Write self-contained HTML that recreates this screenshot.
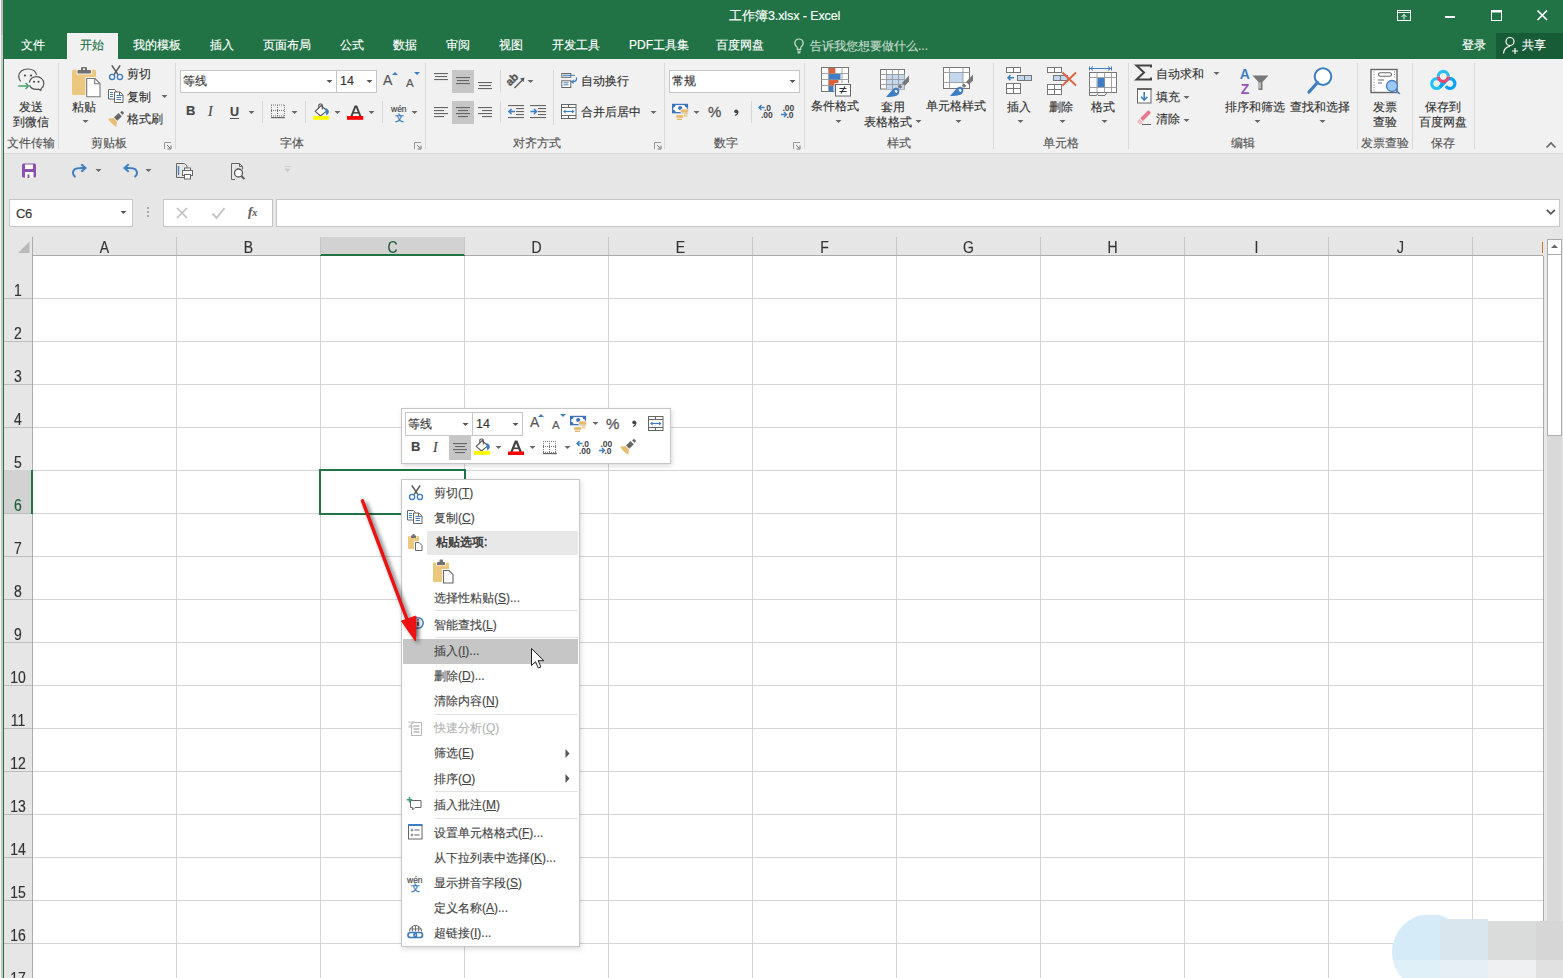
<!DOCTYPE html>
<html><head><meta charset="utf-8">
<style>
*{box-sizing:border-box}
html,body{margin:0;padding:0}
body{width:1563px;height:978px;overflow:hidden;position:relative;background:#fff;font-family:"Liberation Sans",sans-serif;font-size:12px;color:#444}
.a{position:absolute}
.t{position:absolute;white-space:nowrap;line-height:12px;font-size:12px;-webkit-text-stroke:0.15px currentColor}
svg{position:absolute;overflow:visible}
</style></head><body>
<div class="a" style="left:0px;top:0px;width:1px;height:978px;background:#f6f6f6;"></div>
<div class="a" style="left:1px;top:0px;width:2px;height:978px;background:#c9c6c8;"></div>
<div class="a" style="left:1px;top:0px;width:2px;height:35px;background:#bab5b7;"></div>
<div class="a" style="left:3px;top:0px;width:1560px;height:59px;background:#217346;"></div>
<div class="a" style="left:3px;top:0px;width:1px;height:978px;background:#217346;"></div>
<div class="t" style="left:729px;top:10px;font-size:12.5px;color:#fff;">工作簿<span style="letter-spacing:-0.1px">3.xlsx - Excel</span></div>
<svg style="left:1396px;top:9px" width="16" height="13" viewBox="1396 9 16 13"><rect x="1397.5" y="10.5" width="13" height="10" fill="none" stroke="#fff"/><path d="M1397.5 12.5h13" stroke="#fff"/><path d="M1404 19.5v-5M1401.5 17l2.5-2.5 2.5 2.5" fill="none" stroke="#fff"/></svg>
<div class="a" style="left:1445px;top:16px;width:10px;height:2px;background:#fff;"></div>
<svg style="left:1490px;top:9px" width="13" height="13" viewBox="1490 9 13 13"><rect x="1491.5" y="10.5" width="10" height="10" fill="none" stroke="#fff"/><path d="M1491.5 11.5h10" stroke="#fff" stroke-width="2"/></svg>
<svg style="left:1536px;top:9px" width="13" height="13" viewBox="1536 9 13 13"><path d="M1537.5 10.5l9.5 9.5M1547 10.5l-9.5 9.5" stroke="#fff" stroke-width="1.7"/></svg>
<div class="a" style="left:67px;top:33px;width:51px;height:26px;background:#f1f1f1;"></div>
<div class="t" style="left:21px;top:39px;font-size:12px;color:#fff;">文件</div>
<div class="t" style="left:80px;top:39px;font-size:12px;color:#217346;">开始</div>
<div class="t" style="left:133px;top:39px;font-size:12px;color:#fff;">我的模板</div>
<div class="t" style="left:210px;top:39px;font-size:12px;color:#fff;">插入</div>
<div class="t" style="left:263px;top:39px;font-size:12px;color:#fff;">页面布局</div>
<div class="t" style="left:340px;top:39px;font-size:12px;color:#fff;">公式</div>
<div class="t" style="left:393px;top:39px;font-size:12px;color:#fff;">数据</div>
<div class="t" style="left:446px;top:39px;font-size:12px;color:#fff;">审阅</div>
<div class="t" style="left:499px;top:39px;font-size:12px;color:#fff;">视图</div>
<div class="t" style="left:552px;top:39px;font-size:12px;color:#fff;">开发工具</div>
<div class="t" style="left:629px;top:39px;font-size:12px;color:#fff;">PDF工具集</div>
<div class="t" style="left:716px;top:39px;font-size:12px;color:#fff;">百度网盘</div>
<svg style="left:792px;top:36px" width="15" height="20" viewBox="792 36 15 20"><path d="M799 39a4.1 4.1 0 0 0-2.5 7.4c.5.5.8 1.1.8 1.9v1h3.4v-1c0-.8.3-1.4.8-1.9A4.1 4.1 0 0 0 799 39z" fill="none" stroke="#c5dacc" stroke-width="1.2"/><path d="M797.2 51.2h3.6" stroke="#c5dacc" stroke-width="1.1"/><path d="M797.6 52.8h2.8" stroke="#c5dacc" stroke-width="1.4"/></svg>
<div class="t" style="left:810px;top:40px;font-size:12px;color:#c5dacc;">告诉我您想要做什么...</div>
<div class="t" style="left:1462px;top:39px;font-size:12px;color:#fff;">登录</div>
<div class="a" style="left:1496px;top:33px;width:67px;height:26px;background:#185c37;"></div>
<svg style="left:1502px;top:36px" width="20" height="19" viewBox="1502 36 20 19"><circle cx="1510" cy="41.5" r="4" fill="none" stroke="#fff" stroke-width="1.2"/><path d="M1503.5 53.5c0-4 3-7 6.5-7" fill="none" stroke="#fff" stroke-width="1.2"/><path d="M1515 48v6M1512 51h6" stroke="#fff" stroke-width="1.2"/></svg>
<div class="t" style="left:1522px;top:39px;font-size:12px;color:#fff;">共享</div>
<div class="a" style="left:4px;top:59px;width:1559px;height:94px;background:#f1f1f1;"></div>
<div class="a" style="left:4px;top:153px;width:1559px;height:1px;background:#d8d8d8;"></div>
<div class="a" style="left:58px;top:63px;width:1px;height:86px;background:#dadada;"></div>
<div class="a" style="left:175px;top:63px;width:1px;height:86px;background:#dadada;"></div>
<div class="a" style="left:425px;top:63px;width:1px;height:86px;background:#dadada;"></div>
<div class="a" style="left:664px;top:63px;width:1px;height:86px;background:#dadada;"></div>
<div class="a" style="left:804px;top:63px;width:1px;height:86px;background:#dadada;"></div>
<div class="a" style="left:993px;top:63px;width:1px;height:86px;background:#dadada;"></div>
<div class="a" style="left:1128px;top:63px;width:1px;height:86px;background:#dadada;"></div>
<div class="a" style="left:1357px;top:63px;width:1px;height:86px;background:#dadada;"></div>
<div class="a" style="left:1412px;top:63px;width:1px;height:86px;background:#dadada;"></div>
<div class="a" style="left:1474px;top:63px;width:1px;height:86px;background:#dadada;"></div>
<div class="t" style="left:7px;top:137px;font-size:12px;color:#555;">文件传输</div>
<div class="t" style="left:91px;top:137px;font-size:12px;color:#555;">剪贴板</div>
<div class="t" style="left:280px;top:137px;font-size:12px;color:#555;">字体</div>
<div class="t" style="left:513px;top:137px;font-size:12px;color:#555;">对齐方式</div>
<div class="t" style="left:714px;top:137px;font-size:12px;color:#555;">数字</div>
<div class="t" style="left:887px;top:137px;font-size:12px;color:#555;">样式</div>
<div class="t" style="left:1043px;top:137px;font-size:12px;color:#555;">单元格</div>
<div class="t" style="left:1231px;top:137px;font-size:12px;color:#555;">编辑</div>
<div class="t" style="left:1361px;top:137px;font-size:12px;color:#555;">发票查验</div>
<div class="t" style="left:1431px;top:137px;font-size:12px;color:#555;">保存</div>
<svg style="left:164px;top:142px" width="8" height="8" viewBox="164 142 8 8"><path d="M164.5 149V142.5H171" fill="none" stroke="#999"/><path d="M167 145l3.5 3.5M167.5 149h3.5v-3.5" fill="none" stroke="#777"/></svg>
<svg style="left:414px;top:142px" width="8" height="8" viewBox="414 142 8 8"><path d="M414.5 149V142.5H421" fill="none" stroke="#999"/><path d="M417 145l3.5 3.5M417.5 149h3.5v-3.5" fill="none" stroke="#777"/></svg>
<svg style="left:654px;top:142px" width="8" height="8" viewBox="654 142 8 8"><path d="M654.5 149V142.5H661" fill="none" stroke="#999"/><path d="M657 145l3.5 3.5M657.5 149h3.5v-3.5" fill="none" stroke="#777"/></svg>
<svg style="left:793px;top:142px" width="8" height="8" viewBox="793 142 8 8"><path d="M793.5 149V142.5H800" fill="none" stroke="#999"/><path d="M796 145l3.5 3.5M796.5 149h3.5v-3.5" fill="none" stroke="#777"/></svg>
<svg style="left:1545px;top:140px" width="13" height="10" viewBox="1545 140 13 10"><path d="M1546.5 147.5l4.5-4.5 4.5 4.5" fill="none" stroke="#666" stroke-width="1.7"/></svg>
<svg style="left:16px;top:66px" width="32" height="27" viewBox="16 66 32 27"><path d="M20.6 81.3c-1.2-1.4-1.9-3.1-1.9-5 0-4.3 4-7.3 9.1-7.3 4.3 0 7.9 2.3 8.8 5.9" fill="none" stroke="#555" stroke-width="1.2"/><circle cx="25" cy="75.5" r="1.1" fill="#444"/><circle cx="31" cy="75.5" r="1.1" fill="#444"/><path d="M29.3 82.5c.9-3.4 3.7-5.8 7.2-5.8 4 0 7.3 3 7.3 6.7 0 2-.9 3.8-2.4 5l-.6 1.9-2.3-1.2c-.7.2-1.4.3-2.1.3-3.1 0-5.8-1.7-6.8-4.2" fill="none" stroke="#555" stroke-width="1.2"/><circle cx="34" cy="81.7" r="1" fill="#444"/><circle cx="38.5" cy="81.7" r="1" fill="#444"/><path d="M18.3 86h10M25.5 83l3 3-3 3" fill="none" stroke="#4aa56a" stroke-width="1.5"/></svg>
<div class="t" style="left:19px;top:101px;font-size:12px;color:#333;">发送</div>
<div class="t" style="left:13px;top:116px;font-size:12px;color:#333;">到微信</div>
<svg style="left:70px;top:65px" width="32" height="33" viewBox="70 65 32 33"><rect x="72" y="69.7" width="24" height="25.2" rx="1.5" fill="#ecc77e"/><path d="M76.5 69h15.5v5.5h-15.5z" fill="#f1f1f1"/><rect x="77.5" y="70" width="13.5" height="3.6" rx=".8" fill="#707070"/><rect x="81" y="67" width="6" height="4" rx="1.2" fill="#707070"/><rect x="83" y="68.3" width="2" height="1.6" fill="#f1f1f1"/><path d="M85.2 77v20.7h15.8v-15l-5.7-5.7z" fill="#f1f1f1"/><path d="M86.7 78.5h8.3l5 5v13.2h-13.3z" fill="#fff" stroke="#777" stroke-width="1.1"/><path d="M94.7 78.5v5.2h5.2" fill="none" stroke="#777" stroke-width="1.1"/></svg>
<div class="t" style="left:72px;top:101px;font-size:12px;color:#333;">粘贴</div>
<svg style="left:81px;top:119px" width="8" height="5" viewBox="81 119 8 5"><path d="M82.5 120h6l-3 3z" fill="#666"/></svg>
<svg style="left:108px;top:64px" width="17" height="18" viewBox="108 64 17 18"><path d="M111.8 65.4l6.2 9.2M120.2 65.4l-6.2 9.2" stroke="#555" stroke-width="1.5"/><circle cx="112.1" cy="76.9" r="2.6" fill="none" stroke="#3e7ec2" stroke-width="1.3"/><circle cx="119.9" cy="76.9" r="2.6" fill="none" stroke="#3e7ec2" stroke-width="1.3"/></svg>
<div class="t" style="left:127px;top:68px;font-size:12px;color:#333;">剪切</div>
<svg style="left:107px;top:88px" width="17" height="16" viewBox="107 88 17 16"><path d="M108.5 89.5h6l1.5 1.5v8h-7.5z" fill="#fff" stroke="#666"/><path d="M114.5 92h5.5l3 3v7.5h-8.5z" fill="#fff" stroke="#666"/><path d="M119.5 92v3.5h3" fill="none" stroke="#666"/><path d="M110 92.5h3M110 94.5h3M110 96.5h3M116.5 95.5h4.5M116.5 97.5h4.5M116.5 99.5h4.5" stroke="#3e7ec2"/></svg>
<div class="t" style="left:127px;top:91px;font-size:12px;color:#333;">复制</div>
<svg style="left:160px;top:94px" width="8" height="5" viewBox="160 94 8 5"><path d="M161.5 95h6l-3 3z" fill="#666"/></svg>
<svg style="left:106px;top:109px" width="20" height="19" viewBox="106 109 20 19"><path d="M114 117.5L118.5 113L121.8 116.3L117.3 120.8Z" fill="#666"/><path d="M120.2 112.6L122 110.8L124.2 113L122.4 114.8Z" fill="#666"/><path d="M108 118.8L113.3 118L117 121.7L116.2 127Q111 124 108 118.8Z" fill="#e8bd72"/></svg>
<div class="t" style="left:127px;top:113px;font-size:12px;color:#333;">格式刷</div>
<div class="a" style="left:180px;top:70px;width:157px;height:23px;background:#fff;border:1px solid #c6c6c6"></div>
<div class="a" style="left:336px;top:70px;width:41px;height:23px;background:#fff;border:1px solid #c6c6c6"></div>
<div class="t" style="left:183px;top:75px;font-size:12px;color:#333;">等线</div>
<svg style="left:325px;top:79px" width="8" height="5" viewBox="325 79 8 5"><path d="M326.5 80h6l-3 3z" fill="#555"/></svg>
<div class="t" style="left:340px;top:75px;font-size:12.5px;color:#333;">14</div>
<svg style="left:365px;top:79px" width="8" height="5" viewBox="365 79 8 5"><path d="M366.5 80h6l-3 3z" fill="#555"/></svg>
<div class="t" style="left:383px;top:74px;font-size:14px;color:#555;">A</div>
<svg style="left:391px;top:71px" width="8" height="5" viewBox="391 71 8 5"><path d="M392 75l3-3 3 3z" fill="#3e7ec2"/></svg>
<div class="t" style="left:406px;top:77px;font-size:11.5px;color:#555;">A</div>
<svg style="left:413px;top:71px" width="8" height="5" viewBox="413 71 8 5"><path d="M414 72h6l-3 3z" fill="#3e7ec2"/></svg>
<div class="t" style="left:186px;top:105px;font-size:13px;color:#444;font-weight:bold">B</div>
<div class="t" style="left:208px;top:106px;font-size:14px;color:#444;font-style:italic;font-family:Liberation Serif">I</div>
<div class="t" style="left:230px;top:106px;font-size:12.5px;color:#444;font-weight:bold">U</div>
<div class="a" style="left:230px;top:118px;width:9px;height:1.2px;background:#555;"></div>
<svg style="left:247px;top:110px" width="8" height="5" viewBox="247 110 8 5"><path d="M248.5 111h6l-3 3z" fill="#666"/></svg>
<div class="a" style="left:262px;top:101px;width:1px;height:22px;background:#d6d6d6;"></div>
<svg style="left:270px;top:103px" width="16" height="17" viewBox="270 103 16 17"><rect x="271" y="104.5" width="1" height="1" fill="#777"/><rect x="273" y="104.5" width="1" height="1" fill="#777"/><rect x="275" y="104.5" width="1" height="1" fill="#777"/><rect x="277" y="104.5" width="1" height="1" fill="#777"/><rect x="279" y="104.5" width="1" height="1" fill="#777"/><rect x="281" y="104.5" width="1" height="1" fill="#777"/><rect x="283" y="104.5" width="1" height="1" fill="#777"/><rect x="271" y="110" width="1" height="1" fill="#777"/><rect x="273" y="110" width="1" height="1" fill="#777"/><rect x="275" y="110" width="1" height="1" fill="#777"/><rect x="277" y="110" width="1" height="1" fill="#777"/><rect x="279" y="110" width="1" height="1" fill="#777"/><rect x="281" y="110" width="1" height="1" fill="#777"/><rect x="283" y="110" width="1" height="1" fill="#777"/><rect x="271" y="115.5" width="1" height="1" fill="#777"/><rect x="273" y="115.5" width="1" height="1" fill="#777"/><rect x="275" y="115.5" width="1" height="1" fill="#777"/><rect x="277" y="115.5" width="1" height="1" fill="#777"/><rect x="279" y="115.5" width="1" height="1" fill="#777"/><rect x="281" y="115.5" width="1" height="1" fill="#777"/><rect x="283" y="115.5" width="1" height="1" fill="#777"/><rect x="271" y="105" width="1" height="1" fill="#777"/><rect x="271" y="107" width="1" height="1" fill="#777"/><rect x="271" y="109" width="1" height="1" fill="#777"/><rect x="271" y="111" width="1" height="1" fill="#777"/><rect x="271" y="113" width="1" height="1" fill="#777"/><rect x="271" y="115" width="1" height="1" fill="#777"/><rect x="277" y="105" width="1" height="1" fill="#777"/><rect x="277" y="107" width="1" height="1" fill="#777"/><rect x="277" y="109" width="1" height="1" fill="#777"/><rect x="277" y="111" width="1" height="1" fill="#777"/><rect x="277" y="113" width="1" height="1" fill="#777"/><rect x="277" y="115" width="1" height="1" fill="#777"/><rect x="284" y="105" width="1" height="1" fill="#777"/><rect x="284" y="107" width="1" height="1" fill="#777"/><rect x="284" y="109" width="1" height="1" fill="#777"/><rect x="284" y="111" width="1" height="1" fill="#777"/><rect x="284" y="113" width="1" height="1" fill="#777"/><rect x="284" y="115" width="1" height="1" fill="#777"/><rect x="271" y="117" width="14" height="1.2" fill="#666"/></svg>
<svg style="left:290px;top:110px" width="8" height="5" viewBox="290 110 8 5"><path d="M291.5 111h6l-3 3z" fill="#666"/></svg>
<div class="a" style="left:305px;top:101px;width:1px;height:22px;background:#d6d6d6;"></div>
<svg style="left:311px;top:102px" width="20" height="19" viewBox="311 102 20 19"><path d="M315.2 111.3L321.2 105.5L326.8 110.8L320.5 116Z" fill="#fff" stroke="#555" stroke-width="1.1"/><path d="M318.8 108V105Q318.8 104 320 104H321Q322.3 104 322.3 105V109.5" fill="none" stroke="#555" stroke-width="1.1"/><path d="M325.3 108Q329.5 109.5 328.8 112.5Q328 114.5 326.2 115.5L325.8 111Z" fill="#3e7ec2"/><rect x="313" y="116" width="16.2" height="3.8" fill="#ffff00"/></svg>
<svg style="left:333px;top:110px" width="8" height="5" viewBox="333 110 8 5"><path d="M334.5 111h6l-3 3z" fill="#666"/></svg>
<svg style="left:346px;top:103px" width="19" height="18" viewBox="346 103 19 18"><path d="M351.3 116.5l4-10h1.2L360.5 116.5" fill="none" stroke="#444" stroke-width="2"/><path d="M353 112.8h5.6" stroke="#444" stroke-width="1.5"/><rect x="347" y="116" width="16.2" height="3.8" fill="#ff0000"/></svg>
<svg style="left:367px;top:110px" width="8" height="5" viewBox="367 110 8 5"><path d="M368.5 111h6l-3 3z" fill="#666"/></svg>
<div class="a" style="left:382px;top:101px;width:1px;height:22px;background:#d6d6d6;"></div>
<div class="t" style="left:391px;top:103px;font-size:8.5px;color:#444;">wén</div>
<svg style="left:393px;top:111px" width="13" height="11" viewBox="393 111 13 11"><text x="394.8" y="120.5" font-size="9" font-weight="bold" fill="#3e7ec2">文</text></svg>
<svg style="left:410px;top:110px" width="8" height="5" viewBox="410 110 8 5"><path d="M411.5 111h6l-3 3z" fill="#666"/></svg>
<div class="a" style="left:452px;top:70px;width:22px;height:23px;background:#c6c6c6;"></div>
<div class="a" style="left:452px;top:101px;width:22px;height:23px;background:#c6c6c6;"></div>
<svg style="left:432px;top:70px" width="62" height="22" viewBox="432 70 62 22"><rect x="434" y="73" width="14" height="1.1" fill="#666"/><rect x="435" y="76" width="12" height="1.1" fill="#666"/><rect x="434" y="79" width="14" height="1.1" fill="#666"/><rect x="456" y="77" width="14" height="1.1" fill="#666"/><rect x="457" y="80" width="12" height="1.1" fill="#666"/><rect x="456" y="83" width="14" height="1.1" fill="#666"/><rect x="478" y="82" width="14" height="1.1" fill="#666"/><rect x="479" y="85" width="12" height="1.1" fill="#666"/><rect x="478" y="88" width="14" height="1.1" fill="#666"/></svg>
<svg style="left:432px;top:105px" width="62" height="14" viewBox="432 105 62 14"><rect x="434" y="107" width="14" height="1.1" fill="#666"/><rect x="434" y="110" width="10" height="1.1" fill="#666"/><rect x="434" y="113" width="14" height="1.1" fill="#666"/><rect x="434" y="116" width="10" height="1.1" fill="#666"/><rect x="456" y="107" width="14" height="1.1" fill="#666"/><rect x="458" y="110" width="10" height="1.1" fill="#666"/><rect x="456" y="113" width="14" height="1.1" fill="#666"/><rect x="458" y="116" width="10" height="1.1" fill="#666"/><rect x="478" y="107" width="14" height="1.1" fill="#666"/><rect x="482" y="110" width="10" height="1.1" fill="#666"/><rect x="478" y="113" width="14" height="1.1" fill="#666"/><rect x="482" y="116" width="10" height="1.1" fill="#666"/></svg>
<div class="a" style="left:500px;top:70px;width:1px;height:22px;background:#d6d6d6;"></div>
<div class="a" style="left:500px;top:101px;width:1px;height:22px;background:#d6d6d6;"></div>
<svg style="left:506px;top:71px" width="21" height="19" viewBox="506 71 21 19"><text x="0" y="0" font-size="11" font-weight="bold" fill="#555" stroke="#555" stroke-width="0.35" transform="translate(510 86.5) rotate(-45)">ab</text><path d="M514.5 88l9-9" stroke="#555" stroke-width="1.3"/><path d="M524.5 77.5l-4.5 1 3.5 3.5z" fill="#555"/></svg>
<svg style="left:526px;top:79px" width="8" height="5" viewBox="526 79 8 5"><path d="M527.5 80h6l-3 3z" fill="#666"/></svg>
<svg style="left:506px;top:103px" width="42" height="17" viewBox="506 103 42 17"><rect x="508" y="105" width="16" height="1.1" fill="#666"/><rect x="516" y="108" width="8" height="1.1" fill="#666"/><rect x="516" y="111" width="8" height="1.1" fill="#666"/><rect x="516" y="114" width="8" height="1.1" fill="#666"/><rect x="508" y="117" width="16" height="1.1" fill="#666"/><path d="M509 111.5h6M511.5 109l-2.5 2.5 2.5 2.5" fill="none" stroke="#3e7ec2" stroke-width="1.6"/><rect x="530" y="105" width="16" height="1.1" fill="#666"/><rect x="538" y="108" width="8" height="1.1" fill="#666"/><rect x="538" y="111" width="8" height="1.1" fill="#666"/><rect x="538" y="114" width="8" height="1.1" fill="#666"/><rect x="530" y="117" width="16" height="1.1" fill="#666"/><path d="M530.5 111.5h6M534 109l2.5 2.5-2.5 2.5" fill="none" stroke="#3e7ec2" stroke-width="1.6"/></svg>
<div class="a" style="left:553px;top:70px;width:1px;height:55px;background:#d6d6d6;"></div>
<svg style="left:559px;top:71px" width="21" height="19" viewBox="559 71 21 19"><rect x="561.8" y="73.5" width="9" height="3.8" fill="none" stroke="#666"/><rect x="561.8" y="80.8" width="9" height="6.7" fill="#fff" stroke="#666"/><path d="M563 75.3h12M563.5 82.8h5M563.5 84.8h5" stroke="#3e7ec2"/><path d="M576.3 77.5c1 2.5-.5 4.2-3.5 4.2" fill="none" stroke="#3e7ec2" stroke-width="1.3"/><path d="M570.6 81.7l3-2.2v4.4z" fill="#3e7ec2"/></svg>
<div class="t" style="left:581px;top:75px;font-size:12px;color:#333;">自动换行</div>
<svg style="left:559px;top:102px" width="19" height="19" viewBox="559 102 19 19"><rect x="561.5" y="104.5" width="14.5" height="14" fill="#fff" stroke="#666"/><path d="M561.5 107.5h14.5M561.5 115.5h14.5M568.5 104.5v3M568.5 115.5v3" stroke="#666"/><path d="M564.5 111.5h8" stroke="#3e7ec2" stroke-width="1.2"/><path d="M563 111.5l2.5-2v4zM574.5 111.5l-2.5-2v4z" fill="#3e7ec2"/></svg>
<div class="t" style="left:581px;top:106px;font-size:12px;color:#333;">合并后居中</div>
<svg style="left:649px;top:110px" width="8" height="5" viewBox="649 110 8 5"><path d="M650.5 111h6l-3 3z" fill="#666"/></svg>
<div class="a" style="left:669px;top:70px;width:131px;height:23px;background:#fff;border:1px solid #c6c6c6"></div>
<div class="t" style="left:672px;top:75px;font-size:12px;color:#333;">常规</div>
<svg style="left:788px;top:79px" width="8" height="5" viewBox="788 79 8 5"><path d="M789.5 80h6l-3 3z" fill="#555"/></svg>
<svg style="left:670px;top:101px" width="22" height="21" viewBox="670 101 22 21"><rect x="672.65" y="104.45" width="14.8" height="8.2" fill="#fff" stroke="#3d73b8" stroke-width="1.3"/><path d="M672.6 104.39999999999999h3A3 3 0 0 1 672.6 107.39999999999999zM687.5 104.39999999999999v3A3 3 0 0 1 684.5 104.39999999999999zM672.6 112.7v-3A3 3 0 0 1 675.6 112.7zM687.5 112.7h-3A3 3 0 0 1 687.5 109.7z" fill="#3d73b8"/><circle cx="680.2" cy="108.1" r="2.1" fill="#3d73b8"/><rect x="680.5" y="109.1" width="8" height="4" rx="1.6" fill="#e8b96a" stroke="#f1f1f1" stroke-width=".8"/><rect x="683.8" y="113.39999999999999" width="3.6" height="1" fill="#e8b96a"/><rect x="683.8" y="115.3" width="3.6" height="1.2" fill="#e8b96a"/><rect x="675.8" y="114.7" width="7.8" height="3.6" rx="1.5" fill="#e8b96a" stroke="#f1f1f1" stroke-width=".8"/><rect x="677" y="118.8" width="5" height="1.2" fill="#e8b96a"/></svg>
<svg style="left:692px;top:110px" width="8" height="5" viewBox="692 110 8 5"><path d="M693.5 111h6l-3 3z" fill="#666"/></svg>
<div class="t" style="left:708px;top:106px;font-size:15px;color:#555;-webkit-text-stroke:0.3px #555">%</div>
<svg style="left:731px;top:107px" width="10" height="10" viewBox="731 107 10 10"><circle cx="736.2" cy="111.3" r="1.9" fill="#444"/><path d="M737.9 111.5c0 1.8-1 3.2-2.8 4" fill="none" stroke="#444" stroke-width="1.3"/></svg>
<div class="a" style="left:751px;top:101px;width:1px;height:22px;background:#d6d6d6;"></div>
<svg style="left:756px;top:102px" width="44" height="19" viewBox="756 102 44 19"><path d="M759 107.5h5.5M761.5 105l-2.5 2.5 2.5 2.5" fill="none" stroke="#3e7ec2" stroke-width="1.4"/><text x="764" y="111" font-size="8.5" fill="#444" font-weight="bold">.0</text><text x="761" y="118" font-size="8.5" fill="#444" font-weight="bold">.00</text><text x="782.5" y="111" font-size="8.5" fill="#444" font-weight="bold">.00</text><path d="M781 114.5h5.5M784 112l2.5 2.5-2.5 2.5" fill="none" stroke="#3e7ec2" stroke-width="1.4"/><text x="786.5" y="118" font-size="8.5" fill="#444" font-weight="bold">.0</text></svg>
<svg style="left:819px;top:65px" width="34" height="33" viewBox="819 65 34 33"><rect x="821.5" y="67.5" width="27" height="24" fill="#fff" stroke="#777"/><path d="M828.5 67.5v24M835 67.5v24M842 67.5v24M821.5 73.5h27M821.5 79.5h27M821.5 85.5h27" stroke="#999" fill="none" stroke-width=".9"/><rect x="829" y="68" width="6" height="5.5" fill="#e0603b"/><rect x="829" y="74" width="11.5" height="5.5" fill="#3f7ec5"/><rect x="829" y="80" width="9.5" height="5.5" fill="#e0603b"/><rect x="829" y="86" width="4.5" height="5.5" fill="#3f7ec5"/><rect x="834.5" y="83" width="18" height="14" fill="#f1f1f1"/><rect x="835.5" y="84.5" width="15" height="11.5" fill="#fff" stroke="#666"/><path d="M839.5 88.5h7M839.5 91.5h7M845 86.5l-4 7" stroke="#333" stroke-width="1.1"/></svg>
<div class="t" style="left:811px;top:100px;font-size:12px;color:#333;">条件格式</div>
<svg style="left:834px;top:119px" width="8" height="5" viewBox="834 119 8 5"><path d="M835.5 120h6l-3 3z" fill="#666"/></svg>
<svg style="left:878px;top:65px" width="34" height="33" viewBox="878 65 34 33"><rect x="880.5" y="69.5" width="24" height="19.5" fill="#fff" stroke="#777"/><rect x="886.5" y="74.5" width="18" height="14.5" fill="#c3d7ee"/><path d="M886.5 69.5v19.5M892.5 69.5v19.5M898.5 69.5v19.5M880.5 74.5h24M880.5 79.5h24M880.5 84.5h24" stroke="#999" stroke-width=".9"/><path d="M888 97l0 0" /><path d="M886 97L893 89C895 87 898 87.5 899 89.5C900 91.5 899 94 897 95.5C894 97 890 97 886 97z" fill="#3f7ec5"/><path d="M894.5 90.5c1-.9 2.3-.6 2.8.3.4.8 0 1.7-.7 2.2-.6-.1-1.1-.5-1.4-1-.3-.5-.6-1-.7-1.5z" fill="#fff"/><path d="M898 86.5l2-2 2.3 2.3-2 2z" fill="#777"/><path d="M902 83l7-7.5v6l-4.2 4.2z" fill="#777"/></svg>
<div class="t" style="left:881px;top:101px;font-size:12px;color:#333;">套用</div>
<div class="t" style="left:864px;top:116px;font-size:12px;color:#333;">表格格式</div>
<svg style="left:914px;top:119px" width="8" height="5" viewBox="914 119 8 5"><path d="M915.5 120h6l-3 3z" fill="#666"/></svg>
<svg style="left:941px;top:65px" width="35" height="33" viewBox="941 65 35 33"><rect x="943.5" y="67.5" width="26" height="21" fill="#fff" stroke="#777"/><rect x="949.5" y="72.5" width="13.5" height="10" fill="#c3d7ee"/><path d="M949.5 67.5v21M963 67.5v21M943.5 72.5h26M943.5 82.5h26" stroke="#999" stroke-width=".9"/><path d="M950 96L957 88C959 86 962 86.5 963 88.5C964 90.5 963 93 961 94.5C958 96 954 96 950 96z" fill="#3f7ec5"/><path d="M958.5 89.5c1-.9 2.3-.6 2.8.3.4.8 0 1.7-.7 2.2-.6-.1-1.1-.5-1.4-1-.3-.5-.6-1-.7-1.5z" fill="#fff"/><path d="M962 85.5l2-2 2.3 2.3-2 2z" fill="#777"/><path d="M966 82l7-7.5v6l-4.2 4.2z" fill="#777"/></svg>
<div class="t" style="left:926px;top:100px;font-size:12px;color:#333;">单元格样式</div>
<svg style="left:954px;top:119px" width="8" height="5" viewBox="954 119 8 5"><path d="M955.5 120h6l-3 3z" fill="#666"/></svg>
<svg style="left:1004px;top:65px" width="30" height="31" viewBox="1004 65 30 31"><rect x="1006.5" y="67.5" width="14" height="5" fill="#fff" stroke="#777"/><path d="M1013.5 67.5v5" stroke="#777"/><rect x="1017.5" y="75.5" width="14" height="5" fill="#c3d7ee" stroke="#777"/><path d="M1024.5 75.5v5" stroke="#777"/><rect x="1006.5" y="83.5" width="14" height="10" fill="#fff" stroke="#777"/><path d="M1013.5 83.5v10M1006.5 88.5h14" stroke="#777"/><path d="M1008 77.8h6M1010.5 75.3l-2.5 2.5 2.5 2.5" fill="none" stroke="#3e7ec2" stroke-width="1.6"/></svg>
<div class="t" style="left:1007px;top:101px;font-size:12px;color:#333;">插入</div>
<svg style="left:1016px;top:119px" width="8" height="5" viewBox="1016 119 8 5"><path d="M1017.5 120h6l-3 3z" fill="#666"/></svg>
<svg style="left:1045px;top:65px" width="33" height="31" viewBox="1045 65 33 31"><rect x="1047.5" y="67.5" width="14" height="5" fill="#fff" stroke="#777"/><path d="M1054.5 67.5v5" stroke="#777"/><rect x="1053.5" y="75.5" width="14" height="5" fill="#c3d7ee" stroke="#777"/><path d="M1060.5 75.5v5" stroke="#777"/><rect x="1047.5" y="84.5" width="14" height="10" fill="#fff" stroke="#777"/><path d="M1054.5 84.5v10M1047.5 89.5h14" stroke="#777"/><path d="M1062.5 72.5l13.5 13M1076 72.5l-13.5 13" stroke="#e0603b" stroke-width="1.8"/></svg>
<div class="t" style="left:1049px;top:101px;font-size:12px;color:#333;">删除</div>
<svg style="left:1058px;top:119px" width="8" height="5" viewBox="1058 119 8 5"><path d="M1059.5 120h6l-3 3z" fill="#666"/></svg>
<svg style="left:1087px;top:65px" width="32" height="33" viewBox="1087 65 32 33"><path d="M1090 68.5h21" stroke="#3e7ec2"/><path d="M1089.5 66.5v4M1111.5 66.5v4" stroke="#3e7ec2"/><path d="M1093 66.5l-2.5 2 2.5 2M1108 66.5l2.5 2-2.5 2" fill="none" stroke="#3e7ec2"/><rect x="1089.5" y="72.5" width="27" height="20" fill="#fff" stroke="#777"/><path d="M1097 72.5v20M1104.5 72.5v20M1111.5 72.5v20M1089.5 77.5h27M1089.5 87.5h27" stroke="#999" stroke-width=".9"/><rect x="1097.5" y="78" width="7" height="9" fill="#3f7ec5"/><path d="M1089.5 92.5v3h7l2-3M1098 95.5h7l2-3" fill="none" stroke="#777"/></svg>
<div class="t" style="left:1091px;top:101px;font-size:12px;color:#333;">格式</div>
<svg style="left:1100px;top:119px" width="8" height="5" viewBox="1100 119 8 5"><path d="M1101.5 120h6l-3 3z" fill="#666"/></svg>
<svg style="left:1134px;top:63px" width="19" height="19" viewBox="1134 63 19 19"><path d="M1151 67.5v-2h-14.5l7.5 7-7.5 7h14.5v-2" fill="none" stroke="#444" stroke-width="2"/></svg>
<div class="t" style="left:1156px;top:68px;font-size:12px;color:#333;">自动求和</div>
<svg style="left:1212px;top:71px" width="8" height="5" viewBox="1212 71 8 5"><path d="M1213.5 72h6l-3 3z" fill="#666"/></svg>
<svg style="left:1136px;top:87px" width="17" height="18" viewBox="1136 87 17 18"><rect x="1137.5" y="88.5" width="13.5" height="14.5" fill="#fff" stroke="#666"/><rect x="1137" y="88" width="14.5" height="2" fill="#666"/><path d="M1144.2 92v8M1141 96.8l3.2 3.2 3.2-3.2" fill="none" stroke="#3e7ec2" stroke-width="1.6"/></svg>
<div class="t" style="left:1156px;top:91px;font-size:12px;color:#333;">填充</div>
<svg style="left:1182px;top:95px" width="8" height="5" viewBox="1182 95 8 5"><path d="M1183.5 96h6l-3 3z" fill="#666"/></svg>
<svg style="left:1136px;top:110px" width="17" height="17" viewBox="1136 110 17 17"><path d="M1143 121l7.2-7.2c.6-.6.6-1.4 0-2l-.8-.8c-.6-.6-1.4-.6-2 0l-7.2 7.2z" fill="#e8798d"/><path d="M1140.2 118.2l-2.5 2.5c-.5.5-.5 1.3 0 1.8l1.5 1.5h2.5l1.3-1.3-2.8-2.8z" fill="#f3b8c3"/><path d="M1142 124.5h9" stroke="#666"/></svg>
<div class="t" style="left:1156px;top:113px;font-size:12px;color:#333;">清除</div>
<svg style="left:1182px;top:118px" width="8" height="5" viewBox="1182 118 8 5"><path d="M1183.5 119h6l-3 3z" fill="#666"/></svg>
<svg style="left:1238px;top:64px" width="34" height="32" viewBox="1238 64 34 32"><text x="1239.8" y="79.3" font-size="14" font-weight="bold" fill="#3f7ec5" font-family="Liberation Sans">A</text><text x="1240.8" y="93.6" font-size="14" font-weight="bold" fill="#9355c0" font-family="Liberation Sans">Z</text><path d="M1252.5 75.5h16l-6 6.5v8h-4v-8z" fill="#777"/><path d="M1260 82.5v6" stroke="#fff" stroke-width="1"/></svg>
<div class="t" style="left:1225px;top:101px;font-size:12px;color:#333;">排序和筛选</div>
<svg style="left:1253px;top:119px" width="8" height="5" viewBox="1253 119 8 5"><path d="M1254.5 120h6l-3 3z" fill="#666"/></svg>
<svg style="left:1305px;top:65px" width="29" height="31" viewBox="1305 65 29 31"><circle cx="1323" cy="76.6" r="8.3" fill="#fff" stroke="#3e7ec2" stroke-width="2"/><path d="M1317.5 82.5l-8.5 9.5" stroke="#3e7ec2" stroke-width="3.2" stroke-linecap="round"/></svg>
<div class="t" style="left:1290px;top:101px;font-size:12px;color:#333;">查找和选择</div>
<svg style="left:1318px;top:119px" width="8" height="5" viewBox="1318 119 8 5"><path d="M1319.5 120h6l-3 3z" fill="#666"/></svg>
<svg style="left:1368px;top:67px" width="34" height="29" viewBox="1368 67 34 29"><rect x="1371" y="69.5" width="26" height="23" fill="#fff" stroke="#666" stroke-width="1.4"/><path d="M1374 71.5v19M1394.5 71.5v6" stroke="#777" stroke-dasharray="1 1.6"/><rect x="1378.5" y="72.7" width="13" height="3.6" rx="1.8" fill="none" stroke="#666" stroke-width="1.1"/><path d="M1378 80h6M1378 83h4" stroke="#666" stroke-width="1.1"/><circle cx="1392" cy="86" r="5.5" fill="#9ec8f5" stroke="#3f7ec5" stroke-width="1.3"/><path d="M1395.8 90l4 4" stroke="#3f7ec5" stroke-width="1.6"/></svg>
<div class="t" style="left:1373px;top:101px;font-size:12px;color:#333;">发票</div>
<div class="t" style="left:1373px;top:116px;font-size:12px;color:#333;">查验</div>
<svg style="left:1428px;top:68px" width="30" height="24" viewBox="1428 68 30 24"><circle cx="1436.6" cy="83.6" r="4.9" fill="none" stroke="#22c4f5" stroke-width="3.2"/><path d="M1440.1 87.1L1446.5 80.1A4.9 4.9 0 1 1 1445.8 86.1" fill="none" stroke="#0aa2f2" stroke-width="3.2"/><path d="M1438.3 76.4a5 5 0 0 1 10 0" fill="none" stroke="#28c0f6" stroke-width="3.2"/><path d="M1448.3 76.4a5 5 0 0 1-10 0" fill="none" stroke="#f2476a" stroke-width="3.2"/></svg>
<div class="t" style="left:1425px;top:101px;font-size:12px;color:#333;">保存到</div>
<div class="t" style="left:1419px;top:116px;font-size:12px;color:#333;">百度网盘</div>
<div class="a" style="left:4px;top:154px;width:1559px;height:102px;background:#e6e6e6;"></div>
<svg style="left:20px;top:161px" width="19" height="19" viewBox="20 161 19 19"><rect x="22" y="163.5" width="14" height="14" rx="1.5" fill="#8c4fb6"/><rect x="25" y="164.5" width="8" height="4.5" fill="#fff"/><rect x="25" y="172" width="8.5" height="6" fill="#fff"/><rect x="27.5" y="174.5" width="2" height="3.5" fill="#8c4fb6"/></svg>
<svg style="left:70px;top:161px" width="20" height="19" viewBox="70 161 20 19"><path d="M75.5 177c-2.8-1.5-3.5-5.5-1-7.6 1.8-1.5 5-1.6 9.5-1.4" fill="none" stroke="#3e7ec2" stroke-width="2"/><path d="M81.3 164.3l4.2 3.7-4.2 3.7" fill="none" stroke="#3e7ec2" stroke-width="2"/></svg>
<svg style="left:94px;top:168px" width="8" height="5" viewBox="94 168 8 5"><path d="M95.5 169h6l-3 3z" fill="#666"/></svg>
<svg style="left:120px;top:161px" width="20" height="19" viewBox="120 161 20 19"><path d="M134.5 177c2.8-1.5 3.5-5.5 1-7.6-1.8-1.5-5-1.6-9.5-1.4" fill="none" stroke="#3e7ec2" stroke-width="2"/><path d="M128.7 164.3l-4.2 3.7 4.2 3.7" fill="none" stroke="#3e7ec2" stroke-width="2"/></svg>
<svg style="left:144px;top:168px" width="8" height="5" viewBox="144 168 8 5"><path d="M145.5 169h6l-3 3z" fill="#666"/></svg>
<svg style="left:174px;top:161px" width="22" height="21" viewBox="174 161 22 21"><path d="M176.5 163.5h8l2.5 2.5v3" fill="none" stroke="#666"/><path d="M176.5 163.5v14h8" fill="none" stroke="#666"/><path d="M178.5 166v9" stroke="#3e7ec2" stroke-width="1.3"/><rect x="182.5" y="170.5" width="10" height="5" fill="#fff" stroke="#666"/><rect x="184.5" y="168" width="6" height="2.5" fill="#fff" stroke="#666"/><rect x="184.5" y="174.5" width="6" height="4.5" fill="#fff" stroke="#666"/></svg>
<svg style="left:229px;top:161px" width="19" height="21" viewBox="229 161 19 21"><path d="M235 179.5h-3.5v-16h8l3 3v3" fill="none" stroke="#666"/><path d="M239.5 163.5v3h3" fill="none" stroke="#666"/><circle cx="238.5" cy="173" r="4" fill="#fff" stroke="#555" stroke-width="1.3"/><path d="M241.3 176l3.2 3.2" stroke="#555" stroke-width="1.8"/></svg>
<svg style="left:283px;top:165px" width="9" height="10" viewBox="283 165 9 10"><path d="M284.5 166.5h6M285 169h5l-2.5 3z" stroke="#ccc" fill="#ccc" stroke-width=".8"/></svg>
<div class="a" style="left:9px;top:199px;width:124px;height:28px;background:#fff;border:1px solid #c6c6c6"></div>
<div class="t" style="left:16px;top:208px;font-size:13px;color:#333;letter-spacing:-0.3px">C6</div>
<svg style="left:119px;top:210px" width="8" height="5" viewBox="119 210 8 5"><path d="M120.5 211h6l-3 3z" fill="#555"/></svg>
<div class="a" style="left:147px;top:207px;width:2px;height:2px;background:#a8a8a8;"></div>
<div class="a" style="left:147px;top:211px;width:2px;height:2px;background:#a8a8a8;"></div>
<div class="a" style="left:147px;top:215px;width:2px;height:2px;background:#a8a8a8;"></div>
<div class="a" style="left:163px;top:199px;width:110px;height:28px;background:#fff;border:1px solid #c6c6c6"></div>
<svg style="left:174px;top:204px" width="16" height="18" viewBox="174 204 16 18"><path d="M177 208l10 10M187 208l-10 10" stroke="#bdbdbd" stroke-width="1.5"/></svg>
<svg style="left:210px;top:204px" width="18" height="18" viewBox="210 204 18 18"><path d="M212.5 213.5l4 4.5 8-10" fill="none" stroke="#c6c6c6" stroke-width="2"/></svg>
<div class="t" style="left:248px;top:206px;font-size:13px;color:#606060;font-family:Liberation Serif;font-weight:bold"><i>f</i><span style="font-size:10px"><i>x</i></span></div>
<div class="a" style="left:276px;top:199px;width:1284px;height:28px;background:#fff;border:1px solid #c6c6c6"></div>
<svg style="left:1544px;top:206px" width="14" height="12" viewBox="1544 206 14 12"><path d="M1546.8 209.8l4 4 4-4" fill="none" stroke="#555" stroke-width="1.8"/></svg>
<div class="a" style="left:320px;top:237px;width:145px;height:18px;background:#d2d2d2;"></div>
<div class="a" style="left:33px;top:255px;width:1510px;height:1px;background:#ababab;"></div>
<div class="a" style="left:320px;top:254px;width:145px;height:2px;background:#217346;"></div>
<svg style="left:16px;top:239px" width="16" height="16" viewBox="16 239 16 16"><path d="M29.5 241.5v11.5h-11.5z" fill="#b9b9b9"/></svg>
<div class="a" style="left:32px;top:237px;width:1px;height:741px;background:#ababab;"></div>
<div class="t" style="left:94px;top:241px;width:21px;text-align:center;font-size:14px;line-height:14px;transform:scaleY(1.12);transform-origin:50% 11px;color:#333">A</div>
<div class="a" style="left:176px;top:237px;width:1px;height:18px;background:#c6c6c6;"></div>
<div class="t" style="left:238px;top:241px;width:21px;text-align:center;font-size:14px;line-height:14px;transform:scaleY(1.12);transform-origin:50% 11px;color:#333">B</div>
<div class="a" style="left:320px;top:237px;width:1px;height:18px;background:#c6c6c6;"></div>
<div class="t" style="left:382px;top:241px;width:21px;text-align:center;font-size:14px;line-height:14px;transform:scaleY(1.12);transform-origin:50% 11px;color:#1d5c38">C</div>
<div class="a" style="left:464px;top:237px;width:1px;height:18px;background:#c6c6c6;"></div>
<div class="t" style="left:526px;top:241px;width:21px;text-align:center;font-size:14px;line-height:14px;transform:scaleY(1.12);transform-origin:50% 11px;color:#333">D</div>
<div class="a" style="left:608px;top:237px;width:1px;height:18px;background:#c6c6c6;"></div>
<div class="t" style="left:670px;top:241px;width:21px;text-align:center;font-size:14px;line-height:14px;transform:scaleY(1.12);transform-origin:50% 11px;color:#333">E</div>
<div class="a" style="left:752px;top:237px;width:1px;height:18px;background:#c6c6c6;"></div>
<div class="t" style="left:814px;top:241px;width:21px;text-align:center;font-size:14px;line-height:14px;transform:scaleY(1.12);transform-origin:50% 11px;color:#333">F</div>
<div class="a" style="left:896px;top:237px;width:1px;height:18px;background:#c6c6c6;"></div>
<div class="t" style="left:958px;top:241px;width:21px;text-align:center;font-size:14px;line-height:14px;transform:scaleY(1.12);transform-origin:50% 11px;color:#333">G</div>
<div class="a" style="left:1040px;top:237px;width:1px;height:18px;background:#c6c6c6;"></div>
<div class="t" style="left:1102px;top:241px;width:21px;text-align:center;font-size:14px;line-height:14px;transform:scaleY(1.12);transform-origin:50% 11px;color:#333">H</div>
<div class="a" style="left:1184px;top:237px;width:1px;height:18px;background:#c6c6c6;"></div>
<div class="t" style="left:1246px;top:241px;width:21px;text-align:center;font-size:14px;line-height:14px;transform:scaleY(1.12);transform-origin:50% 11px;color:#333">I</div>
<div class="a" style="left:1328px;top:237px;width:1px;height:18px;background:#c6c6c6;"></div>
<div class="t" style="left:1390px;top:241px;width:21px;text-align:center;font-size:14px;line-height:14px;transform:scaleY(1.12);transform-origin:50% 11px;color:#333">J</div>
<div class="a" style="left:1472px;top:237px;width:1px;height:18px;background:#c6c6c6;"></div>
<div class="a" style="left:1542px;top:242px;width:1.3px;height:11px;background:#c47a26;"></div>
<div class="a" style="left:33px;top:256px;width:1510px;height:722px;background:#fff;"></div>
<div class="a" style="left:176px;top:256px;width:1px;height:722px;background:#d4d4d4;"></div>
<div class="a" style="left:320px;top:256px;width:1px;height:722px;background:#d4d4d4;"></div>
<div class="a" style="left:464px;top:256px;width:1px;height:722px;background:#d4d4d4;"></div>
<div class="a" style="left:608px;top:256px;width:1px;height:722px;background:#d4d4d4;"></div>
<div class="a" style="left:752px;top:256px;width:1px;height:722px;background:#d4d4d4;"></div>
<div class="a" style="left:896px;top:256px;width:1px;height:722px;background:#d4d4d4;"></div>
<div class="a" style="left:1040px;top:256px;width:1px;height:722px;background:#d4d4d4;"></div>
<div class="a" style="left:1184px;top:256px;width:1px;height:722px;background:#d4d4d4;"></div>
<div class="a" style="left:1328px;top:256px;width:1px;height:722px;background:#d4d4d4;"></div>
<div class="a" style="left:1472px;top:256px;width:1px;height:722px;background:#d4d4d4;"></div>
<div class="a" style="left:33px;top:298px;width:1510px;height:1px;background:#d4d4d4;"></div>
<div class="a" style="left:33px;top:341px;width:1510px;height:1px;background:#d4d4d4;"></div>
<div class="a" style="left:33px;top:384px;width:1510px;height:1px;background:#d4d4d4;"></div>
<div class="a" style="left:33px;top:427px;width:1510px;height:1px;background:#d4d4d4;"></div>
<div class="a" style="left:33px;top:470px;width:1510px;height:1px;background:#d4d4d4;"></div>
<div class="a" style="left:33px;top:513px;width:1510px;height:1px;background:#d4d4d4;"></div>
<div class="a" style="left:33px;top:556px;width:1510px;height:1px;background:#d4d4d4;"></div>
<div class="a" style="left:33px;top:599px;width:1510px;height:1px;background:#d4d4d4;"></div>
<div class="a" style="left:33px;top:642px;width:1510px;height:1px;background:#d4d4d4;"></div>
<div class="a" style="left:33px;top:685px;width:1510px;height:1px;background:#d4d4d4;"></div>
<div class="a" style="left:33px;top:728px;width:1510px;height:1px;background:#d4d4d4;"></div>
<div class="a" style="left:33px;top:771px;width:1510px;height:1px;background:#d4d4d4;"></div>
<div class="a" style="left:33px;top:814px;width:1510px;height:1px;background:#d4d4d4;"></div>
<div class="a" style="left:33px;top:857px;width:1510px;height:1px;background:#d4d4d4;"></div>
<div class="a" style="left:33px;top:900px;width:1510px;height:1px;background:#d4d4d4;"></div>
<div class="a" style="left:33px;top:943px;width:1510px;height:1px;background:#d4d4d4;"></div>
<div class="a" style="left:33px;top:986px;width:1510px;height:1px;background:#d4d4d4;"></div>
<div class="a" style="left:4px;top:256px;width:28px;height:722px;background:#e6e6e6;"></div>
<div class="a" style="left:4px;top:298px;width:28px;height:1px;background:#bdbdbd;"></div>
<div class="a" style="left:4px;top:341px;width:28px;height:1px;background:#bdbdbd;"></div>
<div class="a" style="left:4px;top:384px;width:28px;height:1px;background:#bdbdbd;"></div>
<div class="a" style="left:4px;top:427px;width:28px;height:1px;background:#bdbdbd;"></div>
<div class="a" style="left:4px;top:470px;width:28px;height:1px;background:#bdbdbd;"></div>
<div class="a" style="left:4px;top:513px;width:28px;height:1px;background:#bdbdbd;"></div>
<div class="a" style="left:4px;top:556px;width:28px;height:1px;background:#bdbdbd;"></div>
<div class="a" style="left:4px;top:599px;width:28px;height:1px;background:#bdbdbd;"></div>
<div class="a" style="left:4px;top:642px;width:28px;height:1px;background:#bdbdbd;"></div>
<div class="a" style="left:4px;top:685px;width:28px;height:1px;background:#bdbdbd;"></div>
<div class="a" style="left:4px;top:728px;width:28px;height:1px;background:#bdbdbd;"></div>
<div class="a" style="left:4px;top:771px;width:28px;height:1px;background:#bdbdbd;"></div>
<div class="a" style="left:4px;top:814px;width:28px;height:1px;background:#bdbdbd;"></div>
<div class="a" style="left:4px;top:857px;width:28px;height:1px;background:#bdbdbd;"></div>
<div class="a" style="left:4px;top:900px;width:28px;height:1px;background:#bdbdbd;"></div>
<div class="a" style="left:4px;top:943px;width:28px;height:1px;background:#bdbdbd;"></div>
<div class="a" style="left:4px;top:470px;width:28px;height:43px;background:#d2d2d2;"></div>
<div class="a" style="left:32px;top:256px;width:1px;height:722px;background:#ababab;"></div>
<div class="a" style="left:31px;top:470px;width:2px;height:44px;background:#217346;"></div>
<div class="t" style="left:4px;top:284px;width:28px;text-align:center;font-size:14px;line-height:14px;transform:scaleY(1.15);transform-origin:50% 11px;color:#333">1</div>
<div class="t" style="left:4px;top:327px;width:28px;text-align:center;font-size:14px;line-height:14px;transform:scaleY(1.15);transform-origin:50% 11px;color:#333">2</div>
<div class="t" style="left:4px;top:370px;width:28px;text-align:center;font-size:14px;line-height:14px;transform:scaleY(1.15);transform-origin:50% 11px;color:#333">3</div>
<div class="t" style="left:4px;top:413px;width:28px;text-align:center;font-size:14px;line-height:14px;transform:scaleY(1.15);transform-origin:50% 11px;color:#333">4</div>
<div class="t" style="left:4px;top:456px;width:28px;text-align:center;font-size:14px;line-height:14px;transform:scaleY(1.15);transform-origin:50% 11px;color:#333">5</div>
<div class="t" style="left:4px;top:499px;width:28px;text-align:center;font-size:14px;line-height:14px;transform:scaleY(1.15);transform-origin:50% 11px;color:#1d5c38">6</div>
<div class="t" style="left:4px;top:542px;width:28px;text-align:center;font-size:14px;line-height:14px;transform:scaleY(1.15);transform-origin:50% 11px;color:#333">7</div>
<div class="t" style="left:4px;top:585px;width:28px;text-align:center;font-size:14px;line-height:14px;transform:scaleY(1.15);transform-origin:50% 11px;color:#333">8</div>
<div class="t" style="left:4px;top:628px;width:28px;text-align:center;font-size:14px;line-height:14px;transform:scaleY(1.15);transform-origin:50% 11px;color:#333">9</div>
<div class="t" style="left:4px;top:671px;width:28px;text-align:center;font-size:14px;line-height:14px;transform:scaleY(1.15);transform-origin:50% 11px;color:#333">10</div>
<div class="t" style="left:4px;top:714px;width:28px;text-align:center;font-size:14px;line-height:14px;transform:scaleY(1.15);transform-origin:50% 11px;color:#333">11</div>
<div class="t" style="left:4px;top:757px;width:28px;text-align:center;font-size:14px;line-height:14px;transform:scaleY(1.15);transform-origin:50% 11px;color:#333">12</div>
<div class="t" style="left:4px;top:800px;width:28px;text-align:center;font-size:14px;line-height:14px;transform:scaleY(1.15);transform-origin:50% 11px;color:#333">13</div>
<div class="t" style="left:4px;top:843px;width:28px;text-align:center;font-size:14px;line-height:14px;transform:scaleY(1.15);transform-origin:50% 11px;color:#333">14</div>
<div class="t" style="left:4px;top:886px;width:28px;text-align:center;font-size:14px;line-height:14px;transform:scaleY(1.15);transform-origin:50% 11px;color:#333">15</div>
<div class="t" style="left:4px;top:929px;width:28px;text-align:center;font-size:14px;line-height:14px;transform:scaleY(1.15);transform-origin:50% 11px;color:#333">16</div>
<div class="t" style="left:4px;top:972px;width:28px;text-align:center;font-size:14px;line-height:14px;transform:scaleY(1.15);transform-origin:50% 11px;color:#333">17</div>
<div class="a" style="left:1543px;top:256px;width:1px;height:722px;background:#ababab;"></div>
<div class="a" style="left:1544px;top:237px;width:19px;height:741px;background:#e6e6e6;"></div>
<div class="a" style="left:1544px;top:256px;width:3px;height:722px;background:#e8e8e8;"></div>
<div class="a" style="left:1547px;top:254px;width:15px;height:724px;background:#d9d9d9;"></div>
<div class="a" style="left:1547px;top:239px;width:15px;height:16px;background:#fff;border:1px solid #ababab"></div>
<svg style="left:1548px;top:243px" width="13" height="9" viewBox="1548 243 13 9"><path d="M1551 248l3.5-3.5 3.5 3.5z" fill="#666"/></svg>
<div class="a" style="left:1547px;top:254px;width:15px;height:182px;background:#fff;border:1px solid #ababab"></div>
<div class="a" style="left:319px;top:469px;width:147px;height:46px;background:transparent;border:2px solid #217346"></div>
<div class="a" style="left:401px;top:408px;width:270px;height:56px;background:#fff;border:1px solid #c6c6c6;box-shadow:1px 2px 5px rgba(0,0,0,0.15)"></div>
<div class="a" style="left:405px;top:412px;width:68px;height:24px;background:#fff;border:1px solid #c6c6c6"></div>
<div class="a" style="left:472px;top:412px;width:51px;height:24px;background:#fff;border:1px solid #c6c6c6"></div>
<div class="t" style="left:408px;top:418px;font-size:12px;color:#333;">等线</div>
<svg style="left:461px;top:422px" width="8" height="5" viewBox="461 422 8 5"><path d="M462.5 423h6l-3 3z" fill="#555"/></svg>
<div class="t" style="left:476px;top:418px;font-size:12.5px;color:#333;">14</div>
<svg style="left:511px;top:422px" width="8" height="5" viewBox="511 422 8 5"><path d="M512.5 423h6l-3 3z" fill="#555"/></svg>
<div class="t" style="left:530px;top:416px;font-size:14px;color:#555;">A</div>
<svg style="left:537px;top:413px" width="8" height="5" viewBox="537 413 8 5"><path d="M538 417l3-3 3 3z" fill="#3e7ec2"/></svg>
<div class="t" style="left:552px;top:419px;font-size:11.5px;color:#555;">A</div>
<svg style="left:559px;top:413px" width="8" height="5" viewBox="559 413 8 5"><path d="M560 414h6l-3 3z" fill="#3e7ec2"/></svg>
<svg style="left:568px;top:413px" width="22" height="23" viewBox="568 413 22 23"><rect x="570.65" y="416.45" width="14.8" height="8.2" fill="#fff" stroke="#3d73b8" stroke-width="1.3"/><path d="M570.6 416.40000000000003h3A3 3 0 0 1 570.6 419.40000000000003zM585.5 416.40000000000003v3A3 3 0 0 1 582.5 416.40000000000003zM570.6 424.7v-3A3 3 0 0 1 573.6 424.7zM585.5 424.7h-3A3 3 0 0 1 585.5 421.7z" fill="#3d73b8"/><circle cx="578.2" cy="420.1" r="2.1" fill="#3d73b8"/><rect x="578.5" y="421.1" width="8" height="4" rx="1.6" fill="#e8b96a" stroke="#f1f1f1" stroke-width=".8"/><rect x="581.8" y="425.40000000000003" width="3.6" height="1" fill="#e8b96a"/><rect x="581.8" y="427.3" width="3.6" height="1.2" fill="#e8b96a"/><rect x="573.8" y="426.7" width="7.8" height="3.6" rx="1.5" fill="#e8b96a" stroke="#f1f1f1" stroke-width=".8"/><rect x="575" y="430.8" width="5" height="1.2" fill="#e8b96a"/></svg>
<svg style="left:591px;top:421px" width="8" height="5" viewBox="591 421 8 5"><path d="M592.5 422h6l-3 3z" fill="#666"/></svg>
<div class="t" style="left:606px;top:418px;font-size:15px;color:#555;-webkit-text-stroke:0.3px #555">%</div>
<svg style="left:629px;top:418px" width="10" height="10" viewBox="629 418 10 10"><circle cx="634.2" cy="422.3" r="1.9" fill="#444"/><path d="M635.9 422.5c0 1.8-1 3.2-2.8 4" fill="none" stroke="#444" stroke-width="1.3"/></svg>
<svg style="left:646px;top:414px" width="20" height="20" viewBox="646 414 20 20"><rect x="648.5" y="416.5" width="14.5" height="14" fill="#fff" stroke="#666"/><path d="M648.5 419.5h14.5M648.5 427.5h14.5M655.5 416.5v3M655.5 427.5v3" stroke="#666"/><path d="M651.5 423.5h8" stroke="#3e7ec2" stroke-width="1.2"/><path d="M650 423.5l2.5-2v4zM661.5 423.5l-2.5-2v4z" fill="#3e7ec2"/></svg>
<div class="t" style="left:411px;top:441px;font-size:13px;color:#444;font-weight:bold">B</div>
<div class="t" style="left:433px;top:442px;font-size:14px;color:#444;font-style:italic;font-family:Liberation Serif">I</div>
<div class="a" style="left:449px;top:436px;width:22px;height:24px;background:#c6c6c6;"></div>
<svg style="left:450px;top:440px" width="22" height="16" viewBox="450 440 22 16"><rect x="453" y="443" width="14" height="1.1" fill="#666"/><rect x="455" y="446" width="10" height="1.1" fill="#666"/><rect x="453" y="449" width="14" height="1.1" fill="#666"/><rect x="455" y="452" width="10" height="1.1" fill="#666"/></svg>
<svg style="left:472px;top:437px" width="20" height="19" viewBox="472 437 20 19"><path d="M476.2 446.3L482.2 440.5L487.8 445.8L481.5 451Z" fill="#fff" stroke="#555" stroke-width="1.1"/><path d="M479.8 443V440Q479.8 439 481 439H482Q483.3 439 483.3 440V444.5" fill="none" stroke="#555" stroke-width="1.1"/><path d="M486.3 443Q490.5 444.5 489.8 447.5Q489 449.5 487.2 450.5L486.8 446Z" fill="#3e7ec2"/><rect x="474" y="451" width="16.2" height="3.8" fill="#ffff00"/></svg>
<svg style="left:494px;top:445px" width="8" height="5" viewBox="494 445 8 5"><path d="M495.5 446h6l-3 3z" fill="#666"/></svg>
<svg style="left:506px;top:437px" width="20" height="20" viewBox="506 437 20 20"><path d="M511.3 452.5l4.3-10.8h1L520.9 452.5" fill="none" stroke="#444" stroke-width="2.2"/><path d="M513 448.3h6" stroke="#444" stroke-width="1.6"/><rect x="508" y="451.5" width="16" height="3.5" fill="#ff0000"/></svg>
<svg style="left:528px;top:445px" width="8" height="5" viewBox="528 445 8 5"><path d="M529.5 446h6l-3 3z" fill="#666"/></svg>
<svg style="left:541px;top:439px" width="18" height="17" viewBox="541 439 18 17"><rect x="543" y="441" width="1" height="1" fill="#777"/><rect x="545" y="441" width="1" height="1" fill="#777"/><rect x="547" y="441" width="1" height="1" fill="#777"/><rect x="549" y="441" width="1" height="1" fill="#777"/><rect x="551" y="441" width="1" height="1" fill="#777"/><rect x="553" y="441" width="1" height="1" fill="#777"/><rect x="555" y="441" width="1" height="1" fill="#777"/><rect x="543" y="446" width="1" height="1" fill="#777"/><rect x="545" y="446" width="1" height="1" fill="#777"/><rect x="547" y="446" width="1" height="1" fill="#777"/><rect x="549" y="446" width="1" height="1" fill="#777"/><rect x="551" y="446" width="1" height="1" fill="#777"/><rect x="553" y="446" width="1" height="1" fill="#777"/><rect x="555" y="446" width="1" height="1" fill="#777"/><rect x="543" y="452" width="1" height="1" fill="#777"/><rect x="545" y="452" width="1" height="1" fill="#777"/><rect x="547" y="452" width="1" height="1" fill="#777"/><rect x="549" y="452" width="1" height="1" fill="#777"/><rect x="551" y="452" width="1" height="1" fill="#777"/><rect x="553" y="452" width="1" height="1" fill="#777"/><rect x="555" y="452" width="1" height="1" fill="#777"/><rect x="543" y="441" width="1" height="1" fill="#777"/><rect x="543" y="443" width="1" height="1" fill="#777"/><rect x="543" y="445" width="1" height="1" fill="#777"/><rect x="543" y="447" width="1" height="1" fill="#777"/><rect x="543" y="449" width="1" height="1" fill="#777"/><rect x="543" y="451" width="1" height="1" fill="#777"/><rect x="549" y="441" width="1" height="1" fill="#777"/><rect x="549" y="443" width="1" height="1" fill="#777"/><rect x="549" y="445" width="1" height="1" fill="#777"/><rect x="549" y="447" width="1" height="1" fill="#777"/><rect x="549" y="449" width="1" height="1" fill="#777"/><rect x="549" y="451" width="1" height="1" fill="#777"/><rect x="555" y="441" width="1" height="1" fill="#777"/><rect x="555" y="443" width="1" height="1" fill="#777"/><rect x="555" y="445" width="1" height="1" fill="#777"/><rect x="555" y="447" width="1" height="1" fill="#777"/><rect x="555" y="449" width="1" height="1" fill="#777"/><rect x="555" y="451" width="1" height="1" fill="#777"/><rect x="543" y="453" width="14" height="1.2" fill="#666"/></svg>
<svg style="left:563px;top:445px" width="8" height="5" viewBox="563 445 8 5"><path d="M564.5 446h6l-3 3z" fill="#666"/></svg>
<svg style="left:573px;top:438px" width="43" height="18" viewBox="573 438 43 18"><path d="M577 443.5h5.5M579.5 441l-2.5 2.5 2.5 2.5" fill="none" stroke="#3e7ec2" stroke-width="1.4"/><text x="582" y="447" font-size="8.5" fill="#444" font-weight="bold">.0</text><text x="579" y="454" font-size="8.5" fill="#444" font-weight="bold">.00</text><text x="600.5" y="447" font-size="8.5" fill="#444" font-weight="bold">.00</text><path d="M599 450.5h5.5M602 448l2.5 2.5-2.5 2.5" fill="none" stroke="#3e7ec2" stroke-width="1.4"/><text x="604.5" y="454" font-size="8.5" fill="#444" font-weight="bold">.0</text></svg>
<svg style="left:618px;top:437px" width="20" height="19" viewBox="618 437 20 19"><path d="M626 445.5L630.5 441L633.8 444.3L629.3 448.8Z" fill="#666"/><path d="M632.2 440.6L634 438.8L636.2 441L634.4 442.8Z" fill="#666"/><path d="M620 446.8L625.3 446L629 449.7L628.2 455Q623 452 620 446.8Z" fill="#e8bd72"/></svg>
<div class="a" style="left:401px;top:479px;width:179px;height:468px;background:#fff;border:1px solid #c6c6c6;box-shadow:1px 2px 5px rgba(0,0,0,0.15)"></div>
<div class="a" style="left:427px;top:531px;width:151px;height:24px;background:#e8e8e8;"></div>
<div class="a" style="left:403px;top:639px;width:175px;height:25px;background:#c6c6c6;"></div>
<div class="t" style="left:434px;top:487px;font-size:12px;color:#444;">剪切(<u>T</u>)</div>
<div class="t" style="left:434px;top:512px;font-size:12px;color:#444;">复制(<u>C</u>)</div>
<div class="t" style="left:434px;top:592px;font-size:12px;color:#444;">选择性粘贴(<u>S</u>)...</div>
<div class="t" style="left:434px;top:619px;font-size:12px;color:#444;">智能查找(<u>L</u>)</div>
<div class="t" style="left:434px;top:645px;font-size:12px;color:#444;">插入(<u>I</u>)...</div>
<div class="t" style="left:434px;top:670px;font-size:12px;color:#444;">删除(<u>D</u>)...</div>
<div class="t" style="left:434px;top:695px;font-size:12px;color:#444;">清除内容(<u>N</u>)</div>
<div class="t" style="left:434px;top:747px;font-size:12px;color:#444;">筛选(<u>E</u>)</div>
<div class="t" style="left:434px;top:773px;font-size:12px;color:#444;">排序(<u>O</u>)</div>
<div class="t" style="left:434px;top:799px;font-size:12px;color:#444;">插入批注(<u>M</u>)</div>
<div class="t" style="left:434px;top:827px;font-size:12px;color:#444;">设置单元格格式(<u>F</u>)...</div>
<div class="t" style="left:434px;top:852px;font-size:12px;color:#444;">从下拉列表中选择(<u>K</u>)...</div>
<div class="t" style="left:434px;top:877px;font-size:12px;color:#444;">显示拼音字段(<u>S</u>)</div>
<div class="t" style="left:434px;top:902px;font-size:12px;color:#444;">定义名称(<u>A</u>)...</div>
<div class="t" style="left:434px;top:927px;font-size:12px;color:#444;">超链接(<u>I</u>)...</div>
<div class="t" style="left:434px;top:722px;font-size:12px;color:#b4b4b4;">快速分析(<u>Q</u>)</div>
<div class="t" style="left:436px;top:536px;font-size:12px;color:#3a3a3a;-webkit-text-stroke:0.5px #3a3a3a">粘贴选项:</div>
<div class="a" style="left:435px;top:610px;width:143px;height:1px;background:#e2e2e2;"></div>
<div class="a" style="left:435px;top:637px;width:143px;height:1px;background:#e2e2e2;"></div>
<div class="a" style="left:435px;top:714px;width:143px;height:1px;background:#e2e2e2;"></div>
<div class="a" style="left:435px;top:791px;width:143px;height:1px;background:#e2e2e2;"></div>
<div class="a" style="left:435px;top:818px;width:143px;height:1px;background:#e2e2e2;"></div>
<svg style="left:564px;top:748px" width="7" height="11" viewBox="564 748 7 11"><path d="M565.5 749l4 4.5-4 4.5z" fill="#555"/></svg>
<svg style="left:564px;top:773px" width="7" height="11" viewBox="564 773 7 11"><path d="M565.5 774l4 4.5-4 4.5z" fill="#555"/></svg>
<svg style="left:406px;top:483px" width="20" height="20" viewBox="406 483 20 20"><path d="M411.8 485.4l6.2 9.2M420.2 485.4l-6.2 9.2" stroke="#555" stroke-width="1.5"/><circle cx="412.1" cy="496.9" r="2.6" fill="none" stroke="#3e7ec2" stroke-width="1.3"/><circle cx="419.9" cy="496.9" r="2.6" fill="none" stroke="#3e7ec2" stroke-width="1.3"/></svg>
<svg style="left:406px;top:509px" width="17" height="16" viewBox="406 509 17 16"><path d="M407.5 510.5h6l1.5 1.5v8h-7.5z" fill="#fff" stroke="#666"/><path d="M413.5 513h5.5l3 3v7.5h-8.5z" fill="#fff" stroke="#666"/><path d="M418.5 513v3.5h3" fill="none" stroke="#666"/><path d="M409 513.5h3M409 515.5h3M409 517.5h3M415.5 516.5h4.5M415.5 518.5h4.5M415.5 520.5h4.5" stroke="#3e7ec2"/></svg>
<svg style="left:406px;top:532px" width="20" height="20" viewBox="406 532 20 20"><rect x="408" y="536" width="11" height="13" rx="1" fill="#ecc77e"/><path d="M410.5 535h6v3h-6z" fill="#fff"/><rect x="411" y="535.5" width="5" height="2.5" fill="#707070"/><rect x="412.5" y="534" width="2" height="2" fill="#707070"/><path d="M414 541h5.5l4 4v6.5h-9.5z" fill="#fff"/><path d="M415.5 542.5h3.5l3 3v5h-6.5z" fill="#fff" stroke="#666"/></svg>
<svg style="left:430px;top:556px" width="28" height="30" viewBox="430 556 28 30"><rect x="433" y="562.5" width="16" height="19.5" rx="1.3" fill="#ecc77e"/><path d="M436 561h10v4.5h-10z" fill="#fff"/><rect x="437" y="562" width="8" height="3" rx=".6" fill="#707070"/><rect x="439.5" y="559.5" width="3.5" height="3" rx="1" fill="#707070"/><path d="M442 569h7.5l5 5v10h-12.5z" fill="#fff"/><path d="M443.5 570.5h5.5l4 4v8.5h-9.5z" fill="#fff" stroke="#666" stroke-width="1.1"/></svg>
<svg style="left:410px;top:615px" width="16" height="16" viewBox="410 615 16 16"><circle cx="418" cy="623" r="5.2" fill="#fff" stroke="#3e7ec2" stroke-width="1.5"/><path d="M418 621.8v4.3" stroke="#333" stroke-width="1.5"/><circle cx="418" cy="619.8" r=".9" fill="#333"/></svg>
<svg style="left:406px;top:719px" width="19" height="19" viewBox="406 719 19 19"><path d="M411.5 722.5h10v13h-10z" fill="#fff" stroke="#b8b8b8"/><path d="M413.5 726h6M413.5 729h6M413.5 732h6" stroke="#b8b8b8" stroke-width="1.3"/><path d="M408 722h6l-5 5h5" fill="none" stroke="#c8c8c8" stroke-width="1.1"/></svg>
<svg style="left:405px;top:795px" width="20" height="18" viewBox="405 795 20 18"><path d="M410.5 800.5h10.5v7h-6l-2.5 2.5v-2.5h-2z" fill="#fff" stroke="#666"/><path d="M409.5 797v5.5M406.8 799.7h5.5" stroke="#3d9c6b" stroke-width="1.5"/></svg>
<svg style="left:406px;top:822px" width="19" height="19" viewBox="406 822 19 19"><rect x="408.5" y="825.5" width="13.5" height="13.5" fill="#fff" stroke="#666"/><rect x="408" y="824" width="14.5" height="2" fill="#3e7ec2"/><circle cx="412" cy="830" r="1" fill="none" stroke="#666" stroke-width=".8"/><circle cx="412" cy="835" r="1" fill="none" stroke="#666" stroke-width=".8"/><path d="M414.5 830h5M414.5 835h5" stroke="#666"/></svg>
<div class="t" style="left:407px;top:874px;font-size:8.5px;color:#444;">wén</div>
<svg style="left:408px;top:881px" width="16" height="11" viewBox="408 881 16 11"><text x="411.2" y="890.5" font-size="9" font-weight="bold" fill="#3e7ec2">文</text></svg>
<svg style="left:405px;top:922px" width="21" height="20" viewBox="405 922 21 20"><path d="M409.5 931.5a6 6 0 0 1 12 0" fill="#fff" stroke="#666"/><path d="M415.5 925.5v6M409.5 929h12M412.5 926.5v5M418.5 926.5v5" stroke="#666" stroke-width=".9"/><rect x="408" y="932.5" width="8.5" height="5" rx="2.5" fill="none" stroke="#3e7ec2" stroke-width="1.7"/><rect x="414" y="932.5" width="8.5" height="5" rx="2.5" fill="none" stroke="#3e7ec2" stroke-width="1.7"/></svg>
<svg style="left:529px;top:646px" width="17" height="25" viewBox="529 646 17 25"><path d="M531.5 648.5v17l4-3.8 2.8 6.3 2.6-1.1-2.8-6.2h5.7z" fill="#fff" stroke="#222" stroke-linejoin="round"/></svg>
<svg style="left:340px;top:480px" width="120" height="190" viewBox="340 480 120 190"><defs><filter id="sh" x="-50%" y="-50%" width="200%" height="200%"><feGaussianBlur stdDeviation="2.2"/></filter></defs><g filter="url(#sh)" opacity="0.6" transform="translate(3,3)"><path d="M362.5 500.8L408 622" stroke="#000" stroke-width="3.4" stroke-linecap="round"/><path d="M401.5 621L416 616L415.5 641z" fill="#000"/></g><path d="M362.5 500.8L408 622" stroke="#ee1111" stroke-width="3.4" stroke-linecap="round"/><path d="M401.5 621L416 616L415.5 641z" fill="#ee1111" stroke="#ee1111" stroke-width="1" stroke-linejoin="round"/></svg>
<div class="a" style="left:1392px;top:915px;width:171px;height:63px;overflow:hidden"><div class="a" style="left:0;top:-1px;width:76px;height:76px;border-radius:38px;background:#d5ebf7;overflow:hidden"><div class="a" style="left:0;top:46px;width:76px;height:40px;background:#e0f0f8"></div></div><div class="a" style="left:48px;top:4px;width:48px;height:59px;background:#dae6ee"></div><div class="a" style="left:96px;top:6px;width:48px;height:57px;background:#dadcdc"></div><div class="a" style="left:144px;top:6px;width:27px;height:57px;background:#d6d6d6"></div><div class="a" style="left:48px;top:45px;width:48px;height:18px;background:#e6eff5"></div><div class="a" style="left:96px;top:45px;width:48px;height:18px;background:#eff0f1"></div><div class="a" style="left:144px;top:45px;width:27px;height:18px;background:#e1e1e1"></div></div>
</body></html>
